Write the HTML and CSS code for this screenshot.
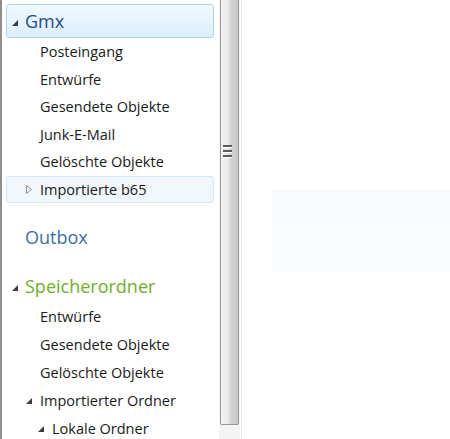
FILE: index.html
```html
<!DOCTYPE html>
<html lang="de">
<head>
    <meta charset="UTF-8">
    <title>Ordner</title>
    <link rel="stylesheet" href="styles.css">
</head>
<body>
    <div class="window">
        <div class="pane">
            <div class="tree">
                <div class="row head selected">
                    <svg class="exp" width="6" height="6" viewBox="0 0 6 6"><path d="M6 0 L6 6 L0 6 Z" fill="#3c3c3c"/></svg>
                    <span class="gmx">Gmx</span>
                </div>
                <div class="row child">Posteingang</div>
                <div class="row child">Entwürfe</div>
                <div class="row child">Gesendete Objekte</div>
                <div class="row child">Junk-E-Mail</div>
                <div class="row child">Gelöschte Objekte</div>
                <div class="row child hover">
                    <svg class="col" width="6" height="9" viewBox="0 0 6 9"><path d="M0.5 0.5 L5.5 4.5 L0.5 8.5 Z" fill="none" stroke="#8c8c8c"/></svg>
                    Importierte b65
                </div>

                <div class="row head outbox">Outbox</div>

                <div class="row head store">
                    <svg class="exp" width="6" height="6" viewBox="0 0 6 6"><path d="M6 0 L6 6 L0 6 Z" fill="#3c3c3c"/></svg>
                    <span>Speicherordner</span>
                </div>
                <div class="row child tall">Entwürfe</div>
                <div class="row child tall">Gesendete Objekte</div>
                <div class="row child tall">Gelöschte Objekte</div>
                <div class="row child tall">
                    <svg class="exp" width="6" height="6" viewBox="0 0 6 6"><path d="M6 0 L6 6 L0 6 Z" fill="#3c3c3c"/></svg>
                    Importierter Ordner
                </div>
                <div class="row child tall sub">
                    <svg class="exp" width="6" height="6" viewBox="0 0 6 6"><path d="M6 0 L6 6 L0 6 Z" fill="#3c3c3c"/></svg>
                    Lokale Ordner
                </div>
            </div>
        </div>
        <div class="scrollbar">
            <div class="thumb">
                <div class="grip"><i></i><i></i><i></i></div>
            </div>
        </div>
        <div class="content">
            <div class="fade"></div>
        </div>
    </div>
</body>
</html>
```

FILE: styles.css
```css
body {
    margin: 0;
    background-color: #fff;
    font-family: "Open Sans", "Noto Sans", sans-serif;
}

.window {
    display: flex;
    width: 450px;
    height: 439px;
    overflow: hidden;
}

.pane {
    width: 217px;
    border-left: 2px solid #8e8e8e;
    background-color: #fff;
}

.tree {
    padding: 4px 5px 0 4px;
    display: flex;
    flex-direction: column;
}

.row {
    display: flex;
    align-items: center;
    position: relative;
    box-sizing: border-box;
    border: 1px solid transparent;
    border-radius: 3px;
    color: #1a1a1a;
    font-size: 14.5px;
    white-space: nowrap;
}

.row .exp,
.row .col {
    position: absolute;
}

.head {
    height: 34px;
    padding-left: 18px;
    font-size: 18px;
}

.head .exp {
    left: 5px;
    top: 15px;
}

.selected {
    border-color: #a9d6f5;
    background: linear-gradient(#f1f8fe, #dcefff);
}

.gmx {
    color: #1f4e80;
}

.child {
    height: 27.5px;
    padding-left: 33px;
}

.child .exp {
    left: 19px;
    top: 11px;
}

.hover {
    border-color: #d2e8f8;
    background-color: #f1f7fd;
}

.hover .col {
    left: 19px;
    top: 8px;
}

.outbox {
    margin-top: 17px;
    color: #3c6ea0;
}

.store {
    margin-top: 15px;
    height: 33px;
    color: #6fae2c;
}

.tall {
    height: 28px;
}

.sub {
    padding-left: 45px;
}

.sub .exp {
    left: 31px;
}

.scrollbar {
    width: 21px;
    background-color: #f4f4f4;
    border-right: 1px solid #fff;
}

.thumb {
    box-sizing: border-box;
    height: 425px;
    margin-left: 1px;
    width: 19px;
    border: 1px solid #979797;
    border-top: none;
    border-radius: 0 0 2px 2px;
    background: linear-gradient(to right, #f3f3f3, #e9e9e9 45%, #d3d3d3 55%, #c9c9c9);
    position: relative;
}

.grip {
    position: absolute;
    left: 2px;
    top: 145px;
    display: flex;
    flex-direction: column;
    gap: 2px;
}

.grip i {
    display: block;
    width: 9px;
    height: 2px;
    background-color: #5a5a5a;
    border-bottom: 1px solid #fff;
}

.content {
    flex: 1;
    border-left: 1px solid #dfe7f1;
    padding-top: 190px;
    padding-left: 30px;
}

.fade {
    height: 82px;
    background: linear-gradient(#f9fafc, #fcfdfe);
    border-top: 1px solid #f3f5f9;
}
```
